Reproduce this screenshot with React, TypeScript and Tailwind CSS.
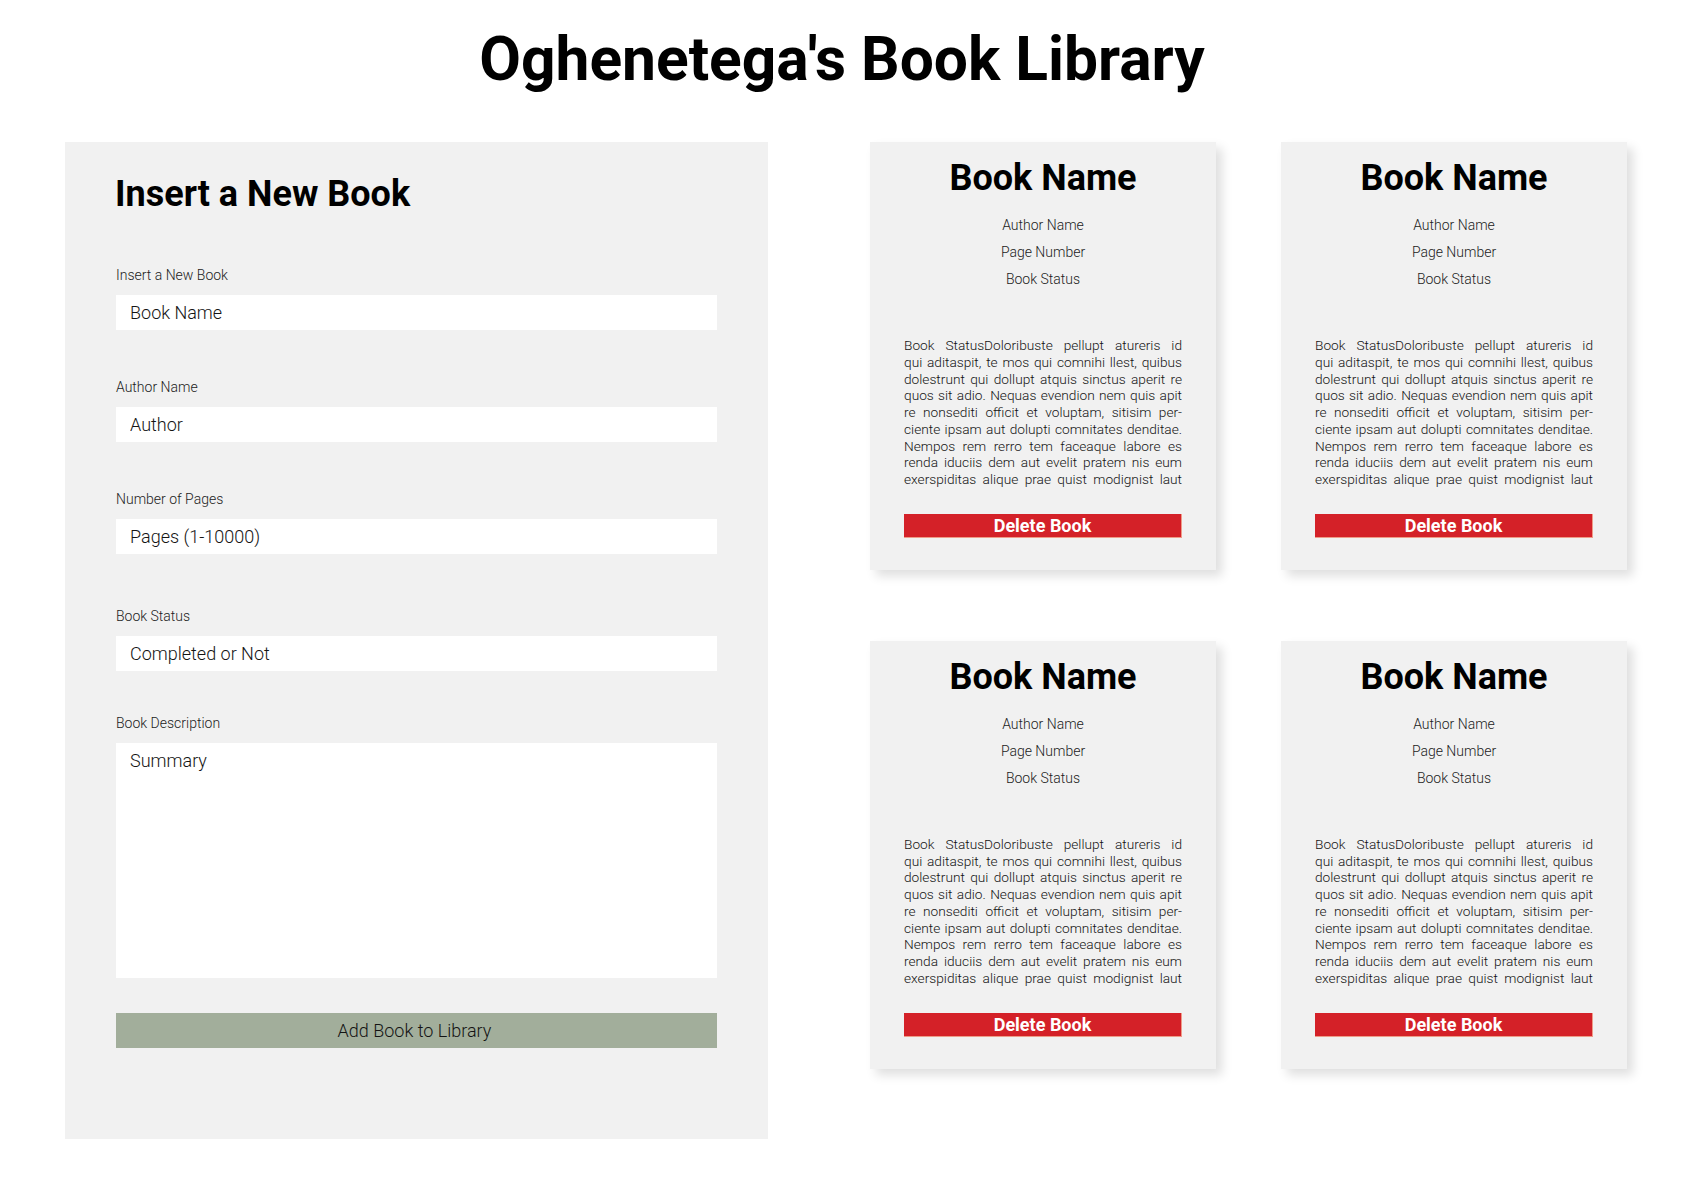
const fields = [
  { label: 'Insert a New Book', placeholder: 'Book Name', mt: 'mt-[51px]' },
  { label: 'Author Name', placeholder: 'Author', mt: 'mt-[47px]' },
  { label: 'Number of Pages', placeholder: 'Pages (1-10000)', mt: 'mt-[47px]' },
  { label: 'Book Status', placeholder: 'Completed or Not', mt: 'mt-[52px]' },
]

const summary = [
  'Book StatusDoloribuste pellupt atureris id',
  'qui aditaspit, te mos qui comnihi llest, quibus',
  'dolestrunt qui dollupt atquis sinctus aperit re',
  'quos sit adio. Nequas evendion nem quis apit',
  're nonsediti officit et voluptam, sitisim per-',
  'ciente ipsam aut dolupti comnitates denditae.',
  'Nempos rem rerro tem faceaque labore es',
  'renda iduciis dem aut evelit pratem nis eum',
  'exerspiditas alique prae quist modignist laut',
]

function BookCard() {
  return (
    <div className="flex flex-col bg-[#f1f1f1] px-[34px] pt-[16px] pb-[32px] shadow-[6px_6px_10px_rgba(0,0,0,0.13)]">
      <h2 className="text-center text-[36px] leading-[40px] font-bold text-black">Book Name</h2>
      <div className="mt-[14px] flex flex-col text-center text-[14px] leading-[27px] font-light text-[#1c1c1c]">
        <span>Author Name</span>
        <span>Page Number</span>
        <span>Book Status</span>
      </div>
      <div className="mt-[44px] flex flex-col text-[13.7px] leading-[16.75px] font-light text-[#141414]">
        {summary.map((line) => (
          <span key={line} className="block whitespace-nowrap text-justify [text-align-last:justify]">
            {line}
          </span>
        ))}
      </div>
      <button className="mt-[26px] h-[24px] w-full border-r border-b border-[#ee9c88] bg-[#d42128] pt-[1px] text-[18px] leading-[22px] font-bold text-white">
        Delete Book
      </button>
    </div>
  )
}

export default function App() {
  return (
    <div className="min-h-screen bg-white pb-[52px] font-['Roboto',sans-serif] text-black">
      <h1 className="pt-[30px] text-center text-[60.5px] leading-[60px] font-bold">Oghenetega's Book Library</h1>

      <div className="mt-[52px] flex items-start gap-[102px] pl-[65px]">
        <form
          className="flex h-[997px] w-[703px] flex-col bg-[#f1f1f1] pt-[32px] pr-[51px] pl-[51px]"
          onSubmit={(e) => e.preventDefault()}
        >
          <h2 className="-ml-px text-[36px] leading-[40px] font-bold">Insert a New Book</h2>

          {fields.map((f) => (
            <label key={f.label} className={`${f.mt} flex flex-col`}>
              <span className="text-[14px] leading-[20px] font-light text-[#1c1c1c]">{f.label}</span>
              <input
                className="mt-[10px] h-[35px] w-full bg-white px-[14px] text-[18px] font-light outline-none placeholder:text-[#141414]"
                placeholder={f.placeholder}
              />
            </label>
          ))}

          <label className="mt-[42px] flex flex-col">
            <span className="text-[14px] leading-[20px] font-light text-[#1c1c1c]">Book Description</span>
            <textarea
              className="mt-[10px] h-[235px] w-full resize-none bg-white px-[14px] pt-[6px] text-[18px] leading-[24px] font-light outline-none placeholder:text-[#141414]"
              placeholder="Summary"
            />
          </label>

          <button
            type="submit"
            className="mt-[35px] h-[35px] w-full bg-[#a2ae9b] pr-[4px] text-[18px] font-light text-[#141414]"
          >
            Add Book to Library
          </button>
        </form>

        <div className="grid grid-cols-[346px_346px] gap-x-[65px] gap-y-[71px]">
          <BookCard />
          <BookCard />
          <BookCard />
          <BookCard />
        </div>
      </div>
    </div>
  )
}
